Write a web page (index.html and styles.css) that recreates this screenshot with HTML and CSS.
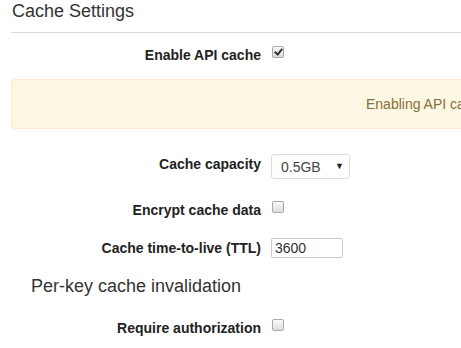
FILE: index.html
```html
<!DOCTYPE html>
<html lang="en">
<head>
  <meta charset="UTF-8" />
  <title>Cache Settings</title>
  <link rel="stylesheet" href="styles.css">
</head>
<body>
  <div class="page">
    <h2 class="section-title">Cache Settings</h2>
    <hr class="divider">

    <div class="field field-enable">
      <label class="field-label" for="enableCache">Enable API cache</label>
      <input type="checkbox" id="enableCache" class="check" checked>
    </div>

    <div class="alert">Enabling API cache will incur additional charges based on the capacity you choose.</div>

    <div class="field field-capacity">
      <label class="field-label" for="capacity">Cache capacity</label>
      <span class="select-wrap">
        <select id="capacity" class="select">
          <option>0.5GB</option>
          <option>1.6GB</option>
          <option>6.1GB</option>
        </select>
        <span class="select-arrow">▼</span>
      </span>
    </div>

    <div class="field field-encrypt">
      <label class="field-label" for="encrypt">Encrypt cache data</label>
      <input type="checkbox" id="encrypt" class="check">
    </div>

    <div class="field field-ttl">
      <label class="field-label" for="ttl">Cache time-to-live (TTL)</label>
      <input type="text" id="ttl" class="text-input" value="3600">
    </div>

    <h3 class="sub-title">Per-key cache invalidation</h3>

    <div class="field field-auth">
      <label class="field-label" for="auth">Require authorization</label>
      <input type="checkbox" id="auth" class="check">
    </div>
  </div>
</body>
</html>
```

FILE: styles.css
```css
html, body {
  margin: 0;
  overflow: hidden;
  background: #fff;
}

body {
  font-family: "Liberation Sans", Arial, sans-serif;
  font-size: 14px;
  color: #333;
}

.page {
  width: 760px;
}

.section-title {
  margin: 0;
  padding-left: 12px;
  font-size: 18px;
  font-weight: normal;
  line-height: 22px;
  color: #333;
}

.divider {
  margin: 10px 0 0 11px;
  border: none;
  border-top: 1px solid #ddd;
}

.field {
  display: flex;
  align-items: center;
  height: 26px;
}

.field-label {
  width: 261px;
  text-align: right;
  font-weight: bold;
  line-height: 20px;
  color: #222;
}

.field-enable { margin-top: 9px; }
.field-capacity { margin-top: 22px; }
.field-encrypt { margin-top: 20px; }
.field-ttl { margin-top: 12px; }
.field-auth { margin-top: 18px; }

.check {
  appearance: none;
  -webkit-appearance: none;
  width: 12px;
  height: 12px;
  margin: 0 0 6px 11px;
  border: 1px solid #a9a9a9;
  border-radius: 2px;
  background: linear-gradient(#fafafa, #dcdcdc);
  position: relative;
  box-sizing: border-box;
}

.check:checked::after {
  content: "";
  position: absolute;
  left: 3px;
  top: 0px;
  width: 3px;
  height: 6px;
  border: solid #333;
  border-width: 0 2px 2px 0;
  transform: rotate(40deg);
}

.alert {
  margin: 11px 0 0 11px;
  height: 48px;
  line-height: 48px;
  padding-left: 354px;
  white-space: nowrap;
  overflow: hidden;
  background: #fcf8e3;
  border: 1px solid #faebcc;
  border-radius: 4px;
  color: #8a6d3b;
}

.select-wrap {
  position: relative;
  margin: 5px 0 0 10px;
}

.select {
  appearance: none;
  -webkit-appearance: none;
  display: block;
  width: 79px;
  height: 25px;
  padding: 0 0 0 9px;
  font-family: inherit;
  font-size: 14px;
  color: #444;
  background: #fff;
  border: 1px solid #ddd;
  border-radius: 3px;
}

.select-arrow {
  position: absolute;
  right: 6px;
  top: 7px;
  font-size: 9px;
  color: #222;
  pointer-events: none;
}

.text-input {
  margin-left: 10px;
  width: 72px;
  height: 20px;
  padding: 0 3px;
  box-sizing: border-box;
  font-family: inherit;
  font-size: 14px;
  color: #333;
  border: 1px solid #ccc;
  border-radius: 2px;
}

.sub-title {
  margin: 14px 0 0;
  padding-left: 31px;
  font-size: 18px;
  font-weight: normal;
  line-height: 22px;
  color: #333;
}
```
